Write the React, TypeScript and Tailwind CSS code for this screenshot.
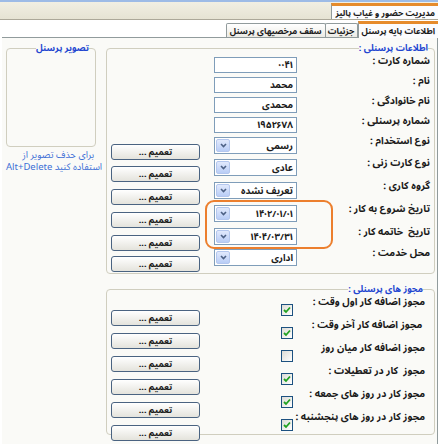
import React from 'react';

// ردیف‌های اطلاعات پرسنلی
const INFO_ROWS: {
  label: string;
  value: string;
  kind: 'text' | 'combo';
  h: string;
}[] = [
  { label: 'شماره کارت :', value: '۰۰۴۱', kind: 'text', h: 'h-[20px]' },
  { label: 'نام :', value: 'محمد', kind: 'text', h: 'h-[20px]' },
  { label: 'نام خانوادگی :', value: 'محمدی', kind: 'text', h: 'h-[20px]' },
  { label: 'شماره پرسنلی :', value: '۱۹۵۲۶۷۸', kind: 'text', h: 'h-[20px]' },
  { label: 'نوع استخدام :', value: 'رسمی', kind: 'combo', h: 'h-[22px]' },
  { label: 'نوع کارت زنی :', value: 'عادی', kind: 'combo', h: 'h-[23px]' },
  { label: 'گروه کاری :', value: 'تعریف نشده', kind: 'combo', h: 'h-[23px]' },
  { label: 'تاریخ شروع به کار :', value: '۱۴۰۲/۰۱/۰۱', kind: 'combo', h: 'h-[23px]' },
  { label: 'تاریخ  خاتمه کار :', value: '۱۴۰۴/۰۳/۳۱', kind: 'combo', h: 'h-[21px]' },
  { label: 'محل خدمت :', value: 'اداری', kind: 'combo', h: 'h-[20px]' },
];

const PERMISSIONS: { label: string; checked: boolean }[] = [
  { label: 'مجوز اضافه کار اول وقت :', checked: true },
  { label: ' مجوز اضافه کار آخر وقت :', checked: true },
  { label: 'مجوز اضافه کار میان روز', checked: false },
  { label: 'مجوز  کار در تعطیلات :', checked: true },
  { label: 'مجوز کار در روز های جمعه :', checked: true },
  { label: 'مجوز کار در روز های پنجشنبه :', checked: true },
];

const TamimButton: React.FC = () => (
  <button className="h-[16px] w-[89px] shrink-0 whitespace-nowrap rounded-[3px] border border-[#4a6381] bg-linear-to-b from-white to-[#e4e3dc] text-[9px] font-bold leading-none text-[#1a1a1a]">
    تعمیم ...
  </button>
);

const TextBox: React.FC<{ value: string }> = ({ value }) => (
  <div className="mt-[3px] h-[16px] w-[83px] shrink-0 overflow-hidden whitespace-nowrap border border-[#7f9db9] bg-white px-[3px] text-[9.5px] font-bold leading-[14px] text-[#1a1a1a]">
    {value}
  </div>
);

const ComboBox: React.FC<{ value: string }> = ({ value }) => (
  <div className="mt-[3px] flex h-[17px] w-[83px] shrink-0 items-center border border-[#7f9db9] bg-white">
    <span className="flex-1 overflow-hidden whitespace-nowrap px-[3px] text-[9.5px] font-bold leading-[15px] text-[#1a1a1a]">{value}</span>
    <span className="m-px flex h-[13px] w-[14px] shrink-0 items-center justify-center rounded-[2px] border border-[#b4c7ee] bg-linear-to-b from-[#e1e9fc] to-[#b9cdf6]">
      <svg width="9" height="9" viewBox="0 0 9 9">
        <path d="M2 3 L4.5 5.5 L7 3" fill="none" stroke="#4d6185" strokeWidth="1.6" />
      </svg>
    </span>
  </div>
);

const CheckBox: React.FC<{ checked: boolean }> = ({ checked }) => (
  <span className="mt-[9px] flex h-[12px] w-[12px] shrink-0 items-center justify-center border border-[#1c5180] bg-linear-to-br from-[#dcdcd6] to-white">
    {checked && (
      <svg width="8" height="8" viewBox="0 0 8 8">
        <path d="M1 4 L3 6 L7 1.5" fill="none" stroke="#21a121" strokeWidth="1.8" />
      </svg>
    )}
  </span>
);

export default function App() {
  return (
    <div
      dir="rtl"
      className="relative h-[444px] w-[438px] overflow-hidden bg-white font-['Noto_Sans_Arabic_UI','Noto_Sans_Arabic','DejaVu_Sans',sans-serif] text-[#1a1a1a]"
    >
      {/* نوار عنوان */}
      <div className="h-[2px] bg-[#9dbbe6]" />
      <div className="flex h-[18px] border-b border-[#aca899] bg-linear-to-b from-[#f1efe3] to-[#e6e3d3]">
        <div className="mt-px min-w-[100px] whitespace-nowrap border-t-[3px] border-l border-t-[#e68b2c] border-l-[#919b9c] bg-[#fcfcfe] px-[3px] text-[8.5px] font-bold leading-[13px]">
          مدیریت حضور و غیاب پالیز
        </div>
      </div>

      {/* زبانه‌ها */}
      <div className="flex h-[17px] items-end bg-white">
        <div className="z-10 -mb-px h-[17px] min-w-[76px] whitespace-nowrap border-t-[3px] border-l border-t-[#e68b2c] border-l-[#919b9c] bg-[#fcfcfe] px-[3px] text-[8.5px] font-bold leading-[13px]">
          اطلاعات پایه پرسنل
        </div>
        <div className="h-[14px] min-w-[33px] whitespace-nowrap rounded-t-[2px] border border-b-0 border-[#919b9c] bg-linear-to-b from-white to-[#ecebe5] px-[2px] text-center text-[8.5px] font-bold leading-[13px]">
          جزئیات
        </div>
        <div className="-mr-px h-[14px] min-w-[95px] whitespace-nowrap rounded-t-[2px] border border-b-0 border-[#919b9c] bg-linear-to-b from-white to-[#ecebe5] px-[3px] text-center text-[8.5px] font-bold leading-[13px]">
          سقف مرخصیهای پرسنل
        </div>
        <div className="flex-1" />
      </div>

      {/* محتوا */}
      <div className="ml-[2px] flex h-[407px] gap-[10px] border-t border-r border-[#919b9c] bg-[#fafaf7] pt-[4px] pr-[2px] pl-[3px]">
        {/* ستون راست */}
        <div className="w-[329px] shrink-0">
          <fieldset className="rounded-[4px] border border-[#d0cebf] pr-[4px] pb-[7px] pl-[4px]">
            <legend className="mr-[2px] whitespace-nowrap text-[9px] font-bold leading-[12px] text-[#2246d0]">اطلاعات پرسنلی :</legend>
            {INFO_ROWS.map((row) => (
              <div key={row.label} className={`flex items-start ${row.h}`}>
                <div className="w-[133px] shrink-0 whitespace-pre text-[10px] font-bold leading-[13px]">{row.label}</div>
                {row.kind === 'text' ? <TextBox value={row.value} /> : <ComboBox value={row.value} />}
                {row.kind === 'combo' && (
                  <div className="mt-[3px] mr-[14px]">
                    <TamimButton />
                  </div>
                )}
              </div>
            ))}
          </fieldset>

          <fieldset className="mt-[9px] rounded-[4px] border border-[#d0cebf] pr-[9px] pb-px pl-[4px]">
            <legend className="mr-[2px] whitespace-nowrap text-[9px] font-bold leading-[12px] text-[#2246d0]">مجوز های پرسنلی :</legend>
            {PERMISSIONS.map((p) => (
              <div key={p.label} className="flex h-[23px] items-start">
                <div className="w-[132px] shrink-0 whitespace-pre text-[10px] font-bold leading-[13px]">{p.label}</div>
                <CheckBox checked={p.checked} />
                <div className="mt-[8px] mr-[81px]">
                  <TamimButton />
                </div>
              </div>
            ))}
          </fieldset>
        </div>

        {/* ستون چپ: تصویر پرسنل */}
        <div className="w-[90px] shrink-0">
          <fieldset className="h-[105px] rounded-[4px] border border-[#d0cebf]">
            <legend className="mr-[6px] whitespace-nowrap text-[9px] font-bold leading-[12px] text-[#2246d0]">تصویر پرسنل</legend>
          </fieldset>
          <div className="mt-[2px] whitespace-nowrap text-right text-[9.5px] leading-[12px] text-[#3d6fd6]">
            <div className="pr-[2px]">برای حذف تصویر از</div>
            <div dir="ltr" className="text-right">Alt+Delete استفاده کنید</div>
          </div>
        </div>
      </div>

      {/* کادر نارنجی دور تاریخ‌ها */}
      <div className="pointer-events-none absolute top-[200px] left-[205px] h-[49px] w-[128px] rounded-[9px] border-2 border-[#ec7f2e]" />
    </div>
  );
}
